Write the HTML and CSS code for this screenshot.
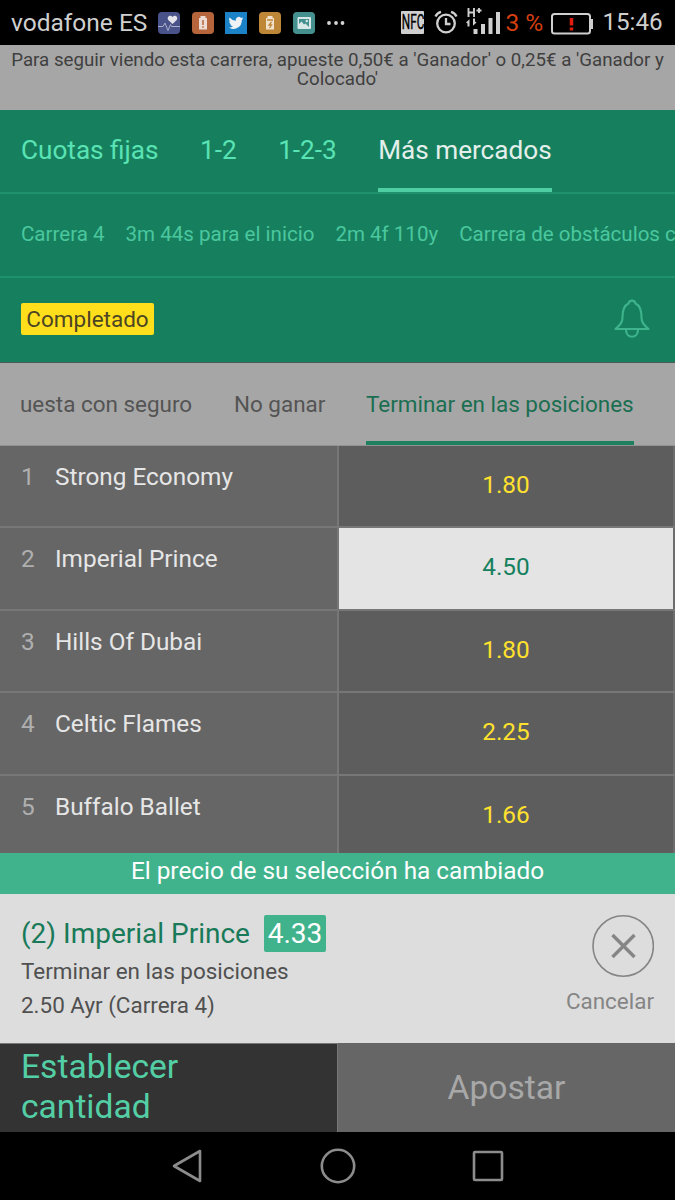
FILE: index.html
```html
<!DOCTYPE html>
<html lang="es">
<head>
<meta charset="utf-8">
<title>Carrera 4</title>
<link rel="stylesheet" href="styles.css">
</head>
<body>
<div class="phone">
  <header class="status">
    <span class="carrier">vodafone ES</span>
    <div class="apps">
      <svg class="app" viewBox="0 0 22 22"><rect width="22" height="22" rx="4" fill="#4a5389"/><path d="M14.500 12 10.500 8.300C8 5 12.200 2 14.500 5c2.300-3 6.500 0 4 3.300z" fill="#e4e4ea"/><path d="M0 14.500h5l2-3.500 3 7.500 2.500-6 1 2H22" fill="none" stroke="#a9aecb" stroke-width="1"/></svg>
      <svg class="app" viewBox="0 0 22 22"><rect width="22" height="22" rx="4" fill="#b5643c"/><path d="M8.500 4h5v2H15v11.500H7V6h1.500z" fill="#ecdcd3"/><path d="M11 8v5M11 14.200v1.500" stroke="#b5643c" stroke-width="1.500"/></svg>
      <svg class="app" viewBox="0 0 22 22"><rect width="22" height="22" fill="#1b82c8"/><path transform="translate(3.500 3.500) scale(.62)" d="M24 4.600a10 10 0 0 1-2.800.8 5 5 0 0 0 2.100-2.700 10 10 0 0 1-3.100 1.200 4.900 4.900 0 0 0-8.400 4.500A14 14 0 0 1 1.700 3.200a4.900 4.900 0 0 0 1.500 6.500 5 5 0 0 1-2.200-.6c0 2.300 1.600 4.400 3.900 4.900a5 5 0 0 1-2.200.1 4.900 4.900 0 0 0 4.600 3.400A10 10 0 0 1 0 19.500a14 14 0 0 0 21.500-12.400A10 10 0 0 0 24 4.600z" fill="#eef2f5"/></svg>
      <svg class="app" viewBox="0 0 22 22"><rect width="22" height="22" rx="4" fill="#be8738"/><path d="M8.500 4h5v2H15v11.500H7V6h1.500z" fill="#f0e2cc"/><path d="M8 8h6M12.500 10 10 13h2.500L10.500 16" fill="none" stroke="#be8738" stroke-width="1.300"/></svg>
      <svg class="app" viewBox="0 0 22 22"><rect width="22" height="22" rx="4" fill="#43908e"/><rect x="4.500" y="5" width="13.500" height="12" rx="1" fill="#d8e8e6"/><path d="M6 7h10v8L12.500 11.500 11 12.500 8.500 9.500 6 12z" fill="#43908e"/><circle cx="13.800" cy="9" r="1.200" fill="#d8e8e6"/></svg>
      <svg class="more" viewBox="0 0 18 6"><g fill="#d4d4d4"><circle cx="2" cy="3" r="1.900"/><circle cx="9" cy="3" r="1.900"/><circle cx="15.500" cy="3" r="1.900"/></g></svg>
    </div>
    <div class="system">
      <span class="nfc"><span class="nfc-text">NFC</span></span>
      <svg class="alarm" viewBox="0 0 24 24"><g fill="none" stroke="#cfcfcf" stroke-width="2.300"><circle cx="12" cy="13.500" r="8.800"/><path d="M12 8v6h4.500M1.500 6.500C2.500 4 4.500 2.500 7 1.800M22.500 6.500c-1-2.500-3-4-5.500-4.700"/></g></svg>
      <svg class="signal" viewBox="0 0 34 28"><g fill="#d0d0d0"><path d="M7.500 22h4v5h-4zM15 17h4v10h-4zM22.500 11h4v16h-4zM30 5h4v22h-4z"/><path d="M0 15.500l3.500-3.200V19.500h-2v-3zM10.500 15.500 7 18.800v-7.300h2v3z"/></g><path d="M2.500 1v9M8 1v9M2.500 5.500H8M10.500 3.500h5M13 1v5" fill="none" stroke="#d0d0d0" stroke-width="1.900"/></svg>
      <span class="percent">3 %</span>
      <svg class="battery" viewBox="0 0 42 22"><rect x="1" y="1" width="38" height="19.500" rx="2.500" fill="none" stroke="#cfcfcf" stroke-width="2"/><path d="M40 6h2v10h-2z" fill="#cfcfcf"/><path d="M20.500 5v7.500M20.500 14.500v3" stroke="#e01c10" stroke-width="3.500"/></svg>
      <span class="clock">15:46</span>
    </div>
  </header>

  <p class="notice">Para seguir viendo esta carrera, apueste 0,50€ a 'Ganador' o 0,25€ a 'Ganador y Colocado'</p>

  <nav class="markets">
    <span class="market">Cuotas fijas</span>
    <span class="market">1-2</span>
    <span class="market">1-2-3</span>
    <span class="market active">Más mercados</span>
  </nav>
  <div class="meta">
    <span>Carrera 4</span><span>3m 44s para el inicio</span><span>2m 4f 110y</span><span>Carrera de obstáculos c</span>
  </div>
  <div class="race-state">
    <span class="badge">Completado</span>
    <svg class="bell" viewBox="0 0 36 40"><path d="M1.500 30C6 26 8.500 23.500 8.500 18.500c0-8 1.500-12 6-14 1-3.800 6-3.800 7 0 4.500 2 6 6 6 14 0 5 2.500 7.500 7 11.500zM12 31c0 9 12 9 12 0" fill="none" stroke="#3fb38c" stroke-width="2.100" stroke-linejoin="round"/></svg>
  </div>

  <nav class="tabs">
    <span class="tab first">uesta con seguro</span>
    <span class="tab second">No ganar</span>
    <span class="tab active">Terminar en las posiciones</span>
  </nav>

  <main class="runners">
    <div class="runner"><span class="num">1</span><span class="name">Strong Economy</span><span class="odds">1.80</span></div>
    <div class="runner"><span class="num">2</span><span class="name">Imperial Prince</span><span class="odds selected">4.50</span></div>
    <div class="runner"><span class="num">3</span><span class="name">Hills Of Dubai</span><span class="odds">1.80</span></div>
    <div class="runner"><span class="num">4</span><span class="name">Celtic Flames</span><span class="odds">2.25</span></div>
    <div class="runner"><span class="num">5</span><span class="name">Buffalo Ballet</span><span class="odds">1.66</span></div>
  </main>

  <div class="banner">El precio de su selección ha cambiado</div>
  <section class="slip">
    <div class="pick">
      <div class="pick-title"><span class="pick-name">(2) Imperial Prince</span><span class="price">4.33</span></div>
      <div class="detail market-name">Terminar en las posiciones</div>
      <div class="detail race-name">2.50 Ayr (Carrera 4)</div>
    </div>
    <div class="cancel">
      <svg class="close" viewBox="0 0 62 62"><circle cx="31.200" cy="31" r="30.200" fill="none" stroke="#858585" stroke-width="1.600"/><path d="M20.500 20 42.500 42M42.500 20 20.500 42" stroke="#858585" stroke-width="3.400"/></svg>
      <span class="cancel-text">Cancelar</span>
    </div>
  </section>
  <div class="actions">
    <div class="stake">Establecer<br>cantidad</div>
    <div class="place">Apostar</div>
  </div>
  <footer class="softkeys">
    <svg class="key" viewBox="0 0 36 36"><path d="M4 18 30 3v30z" fill="none" stroke="#8c8c8c" stroke-width="2.600" stroke-linejoin="round"/></svg>
    <svg class="key" viewBox="0 0 36 36"><circle cx="18" cy="18" r="16.200" fill="none" stroke="#8c8c8c" stroke-width="2.600"/></svg>
    <svg class="key" viewBox="0 0 36 36"><rect x="4" y="4" width="28" height="28" rx="1" fill="none" stroke="#8c8c8c" stroke-width="2.600"/></svg>
  </footer>
</div>
</body>
</html>
```
FILE: styles.css
```css
* { box-sizing: border-box; }
body { margin: 0; background: #000; font-family: Roboto, "Liberation Sans", sans-serif; }
.phone { width: 675px; height: 1200px; display: flex; flex-direction: column; overflow: hidden; }
.phone > * { flex-shrink: 0; }
span, .banner, .detail { white-space: nowrap; }
svg { display: block; flex-shrink: 0; }

.status { height: 45px; display: flex; align-items: center; padding-left: 11px; background: #000; color: #cfcfcf; }
.carrier { width: 147px; font-size: 24.500px; line-height: 47px; }
.apps { display: flex; align-items: center; gap: 11.700px; }
.app { width: 22px; height: 22px; }
.more { width: 18px; height: 6px; margin-left: 1px; }
.system { flex: 1; display: flex; align-items: center; margin-left: 56px; }
.nfc { width: 23px; height: 23px; overflow: hidden; background: #cfcfcf; border-radius: 1px; color: #000; display: flex; justify-content: center; align-items: center; }
.nfc-text { font-size: 21px; line-height: 23px; transform: scaleX(.56); -webkit-text-stroke: .4px #000; }
.alarm { width: 24px; height: 24px; margin-left: 10px; margin-top: -2px; }
.signal { width: 34px; height: 28px; margin-left: 8px; margin-top: -4px; }
.percent { width: 44px; margin-left: 5px; font-size: 24.500px; line-height: 47px; color: #d63f10; }
.battery { width: 42px; height: 22px; margin-left: 2px; margin-top: 2px; }
.clock { margin-left: 9px; font-size: 24.200px; line-height: 47px; }

.notice { height: 65px; margin: 0; padding: 6px 0 0; background: #a6a6a6; color: #3f3f3f; font-size: 18.720px; line-height: 19px; text-align: center; }

.markets { height: 84px; display: flex; gap: 41.500px; padding-left: 21px; background: #16805e; border-bottom: 2px solid #1f916c; color: #5ae3b4; font-size: 26.150px; line-height: 80px; }
.market.active { height: 82px; color: #e4efeb; border-bottom: 4px solid #4fcda3; }
.meta { height: 84px; display: flex; gap: 21px; padding-left: 21px; background: #16805e; border-bottom: 2px solid #1f916c; color: #4bc79e; font-size: 20.550px; line-height: 80px; overflow: hidden; }
.race-state { height: 85px; display: flex; align-items: center; justify-content: space-between; padding: 0 25px 2px 21px; background: #16805e; border-bottom: 1px solid #4b5b55; }
.badge { width: 133px; height: 32px; background: #ffdf1b; border-radius: 2px; color: #4c4524; font-size: 22.500px; line-height: 33px; text-align: center; }
.bell { width: 36px; height: 40px; }

.tabs { height: 83px; display: flex; padding-left: 20px; background: #a6a6a6; border-bottom: 1px solid #929292; color: #545454; font-size: 22.450px; line-height: 82px; }
.tab.first { width: 214px; }
.tab.second { width: 132px; }
.tab.active { width: 268px; height: 82px; color: #1a6e51; border-bottom: 4px solid #1f805f; }

.runners { height: 407px; overflow: hidden; background: #5d5d5d; }
.runner { height: 82.400px; display: flex; background: #666; border-bottom: 2px solid #777; color: #e6e6e6; font-size: 24.350px; line-height: 62px; }
.num { width: 55px; padding-left: 21px; color: #afafaf; }
.name { width: 284px; border-right: 2px solid #777; }
.odds { flex: 1; border-right: 2px solid #6d6d6d; background: #5d5d5d; color: #ffe12e; line-height: 77px; text-align: center; }
.odds.selected { background: #e4e4e4; color: #16805e; }

.banner { height: 41px; padding-bottom: 4px; background: #40b38d; color: #fff; font-size: 24.350px; line-height: 36px; text-align: center; }
.slip { height: 149px; display: flex; justify-content: space-between; padding: 21px 21px 0; background: #ddd; }
.pick-title { display: flex; height: 38px; font-size: 28px; line-height: 38px; }
.pick-name { width: 243px; color: #187a58; }
.price { width: 62px; height: 37px; background: #40b38d; border-radius: 2px; color: #fff; text-align: center; }
.detail { height: 34px; color: #505050; font-size: 22.450px; line-height: 36px; }
.cancel { display: flex; flex-direction: column; align-items: flex-end; color: #858585; }
.close { width: 62px; height: 62px; }
.cancel-text { font-size: 22.450px; line-height: 48px; }
.actions { height: 89px; display: grid; grid-template-columns: 338px 1fr; }
.stake { padding: 3px 0 0 21px; background: #333; border-top: 1px solid #777; border-right: 1px solid #777; color: #54cfa5; font-size: 33.600px; line-height: 40px; }
.place { background: #666; color: #a8a8a8; font-size: 33.600px; line-height: 89px; text-align: center; }
.softkeys { height: 68px; display: flex; justify-content: center; gap: 114px; padding-top: 16px; background: #000; }
.key { width: 36px; height: 36px; }
```
